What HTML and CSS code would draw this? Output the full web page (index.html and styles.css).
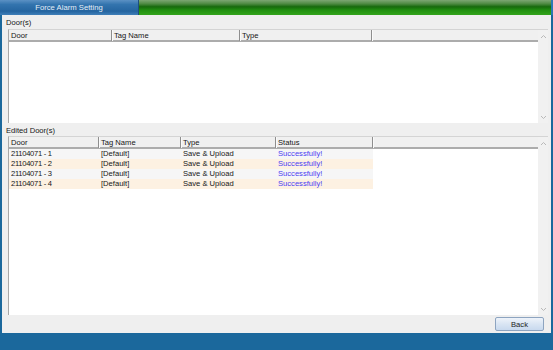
FILE: index.html
```html
<!DOCTYPE html>
<html lang="en">
<head>
    <meta charset="UTF-8">
    <title>Force Alarm Setting</title>
    <link rel="stylesheet" href="styles.css">
</head>
<body>
    <div class="window">
        <div class="titlebar">
            <div class="tab">Force Alarm Setting</div>
            <div class="strip"></div>
        </div>

        <div class="panel">
            <div class="group-label">Door(s)</div>
            <div class="list list-doors">
                <div class="list-body">
                    <div class="list-head cols-doors">
                        <span>Door</span>
                        <span>Tag Name</span>
                        <span>Type</span>
                        <span class="filler"></span>
                    </div>
                </div>
                <div class="scrollbar">
                    <svg class="arrow" width="7" height="5" viewBox="0 0 7 5"><path d="M1 4 L3.5 1.5 L6 4" /></svg>
                    <svg class="arrow" width="7" height="5" viewBox="0 0 7 5"><path d="M1 1 L3.5 3.5 L6 1" /></svg>
                </div>
            </div>

            <div class="group-label edited">Edited Door(s)</div>
            <div class="list list-edited">
                <div class="list-body">
                    <div class="list-head cols-edited">
                        <span>Door</span>
                        <span>Tag Name</span>
                        <span>Type</span>
                        <span>Status</span>
                        <span class="filler"></span>
                    </div>
                    <div class="row cols-edited">
                        <span class="door-id">21104071 - 1</span><span>[Default]</span><span>Save &amp; Upload</span><span class="status">Successfully!</span>
                    </div>
                    <div class="row alt cols-edited">
                        <span class="door-id">21104071 - 2</span><span>[Default]</span><span>Save &amp; Upload</span><span class="status">Successfully!</span>
                    </div>
                    <div class="row cols-edited">
                        <span class="door-id">21104071 - 3</span><span>[Default]</span><span>Save &amp; Upload</span><span class="status">Successfully!</span>
                    </div>
                    <div class="row alt cols-edited">
                        <span class="door-id">21104071 - 4</span><span>[Default]</span><span>Save &amp; Upload</span><span class="status">Successfully!</span>
                    </div>
                </div>
                <div class="scrollbar">
                    <svg class="arrow" width="7" height="5" viewBox="0 0 7 5"><path d="M1 4 L3.5 1.5 L6 4" /></svg>
                    <svg class="arrow" width="7" height="5" viewBox="0 0 7 5"><path d="M1 1 L3.5 3.5 L6 1" /></svg>
                </div>
            </div>

            <div class="footer">
                <button class="button">Back</button>
            </div>
        </div>
    </div>
</body>
</html>
```

FILE: styles.css
```css
body {
    margin: 0;
    padding: 0;
    background: #1b689c;
    font-family: 'Liberation Sans', Arial, sans-serif;
    font-size: 7.6px;
    color: #161616;
}

.window {
    width: 553px;
    height: 350px;
    display: flex;
    flex-direction: column;
}

.titlebar {
    display: flex;
    height: 15px;
}

.tab {
    width: 138px;
    background: linear-gradient(#5b91c4, #3374ae 30%, #2565a0 75%, #3f7fb9 100%);
    border-right: 1px solid #1d4f80;
    color: #e4edf6;
    text-align: center;
    line-height: 15px;
    font-size: 7.7px;
}

.strip {
    flex: 1;
    background: linear-gradient(#7da673, #4f8a43 25%, #176a0c 45%, #239212 70%, #33a41c 100%);
    border-right: 2px solid #2b7ab3;
}

.panel {
    height: 318px;
    margin: 0 2px;
    background: #efefef;
    display: flex;
    flex-direction: column;
}

.group-label {
    height: 14px;
    line-height: 15px;
    padding-left: 4px;
}

.group-label.edited {
    height: 13px;
    line-height: 15px;
}

.list {
    display: flex;
    margin: 0 3px 0 6px;
    background: #ffffff;
    border-top: 1px solid #d4d4d4;
    border-left: 1px solid #a8a8a8;
}

.list-doors {
    height: 93px;
}

.list-edited {
    height: 178px;
}

.list-body {
    flex: 1;
}

.list-head {
    display: grid;
    height: 10px;
    line-height: 11px;
    background: #f0f0f0;
    border-bottom: 2px solid #acacac;
}

.list-head span {
    padding-left: 2px;
    border-right: 1px solid #8e8e8e;
    box-shadow: 1px 0 0 #fafafa;
}

.list-head span.filler {
    border-right: none;
    box-shadow: none;
}

.cols-doors {
    grid-template-columns: 103px 128px 132px 1fr;
}

.cols-edited {
    grid-template-columns: 90px 82px 95px 97px 1fr;
}

.row {
    display: grid;
    width: 364px;
    grid-template-columns: 90px 82px 95px 97px;
    height: 10px;
    line-height: 10px;
    background: #f6f6f6;
}

.row.alt {
    background: #fdf1e2;
}

.row span {
    padding-left: 2px;
}

.row .door-id {
    letter-spacing: -0.3px;
}

.row .status {
    color: #4c3ef2;
}

.scrollbar {
    width: 10px;
    background: #f1f1f1;
    display: flex;
    flex-direction: column;
    justify-content: space-between;
    align-items: center;
    padding: 4px 0 3px;
}

.arrow path {
    fill: none;
    stroke: #b9b9b9;
    stroke-width: 1;
}

.footer {
    flex: 1;
    display: flex;
    justify-content: flex-end;
    align-items: flex-start;
    padding: 2px 7px 0 0;
}

.button {
    width: 49px;
    height: 14px;
    padding: 0;
    font-family: 'Liberation Sans', Arial, sans-serif;
    font-size: 7.6px;
    color: #1a1a1a;
    background: linear-gradient(#eef3fa, #d9e5f3 50%, #c8d9ee 100%);
    border: 1px solid #8da4c0;
    border-radius: 2px;
}
```
